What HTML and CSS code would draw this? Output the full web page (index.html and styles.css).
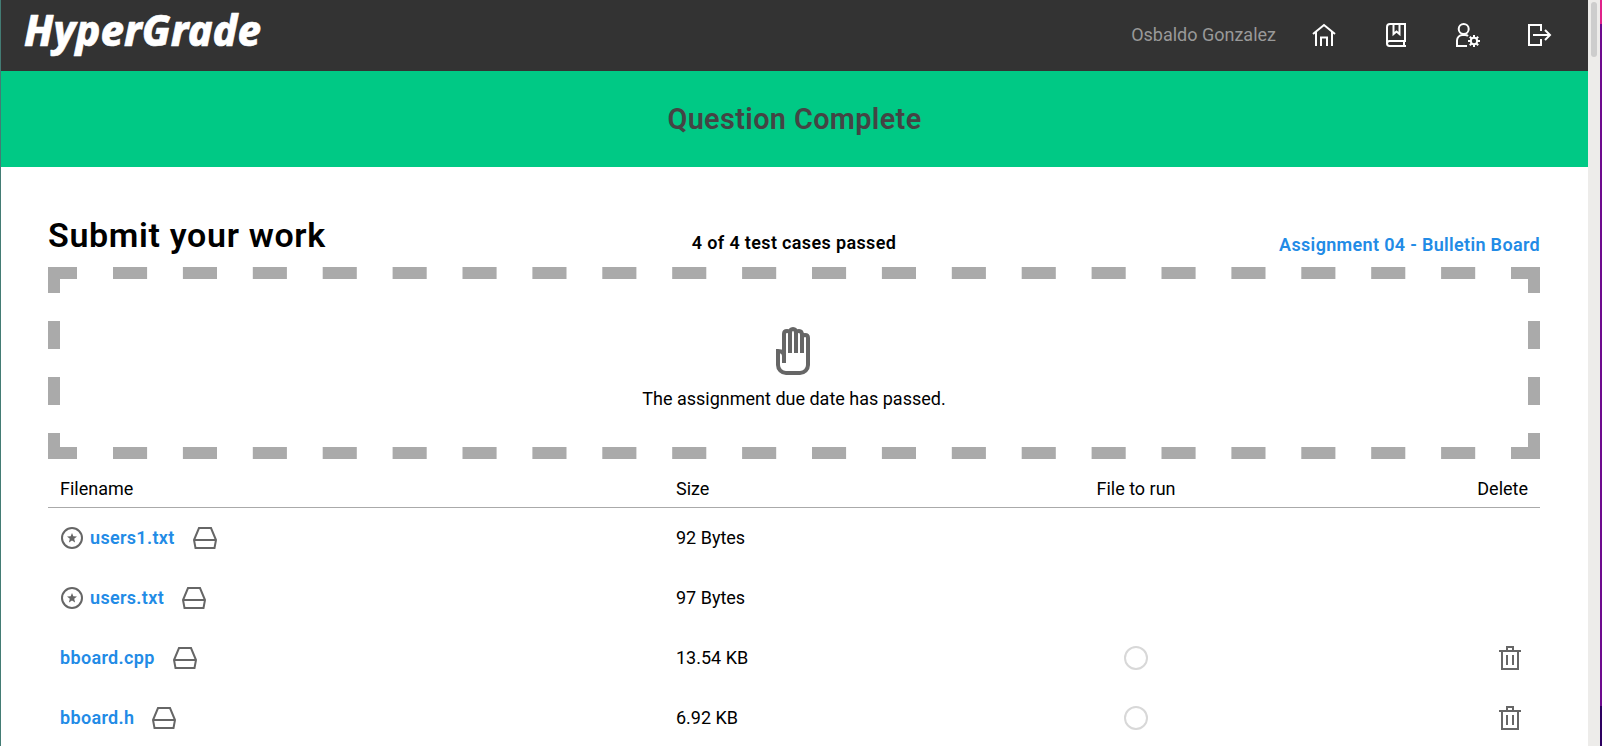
FILE: index.html
```html
<!DOCTYPE html>
<html lang="en">
<head>
<meta charset="utf-8">
<title>HyperGrade</title>
<link rel="stylesheet" href="styles.css">
</head>
<body>
<svg class="defs" width="0" height="0">
  <symbol id="drive" viewBox="0 0 24 24"><path d="M6 2h12l5 12-1.5 8h-19L1 14zM1 14h22"/></symbol>
  <symbol id="star" viewBox="0 0 24 24"><circle cx="12" cy="12" r="10"/><path class="solid" d="M12 7l1.3 3.3 3.7.2-2.8 2.3.9 3.6-3.1-2-3.1 2 .9-3.6L7 10.500l3.700-.2z"/></symbol>
  <symbol id="trash" viewBox="0 0 24 24"><path d="M1 5h22M4 5v18h16V5M9 5V1h6v4M9 9v10M15 9v10"/></symbol>
</svg>
<div class="window">
  <div class="page">
    <header class="topbar">
      <svg class="logo" width="250" height="60" viewBox="0 0 250 60"><text x="2" y="45.500" textLength="237" lengthAdjust="spacingAndGlyphs">HyperGrade</text></svg>
      <nav class="nav">
        <span class="user">Osbaldo Gonzalez</span>
        <svg class="icon" viewBox="0 0 24 24"><path d="M1 11l11-9 11 9M4 9v14M20 9v14M9 23v-8.500h6V23"/></svg>
        <svg class="icon" viewBox="0 0 24 24"><path d="M3 20.500V4a3 3 0 0 1 3-3h15v17H5.500a2.500 2.500 0 0 0 0 5H22M20 18v5M9.500 1v10l3-2.500 3 2.500V1"/></svg>
        <svg class="icon" viewBox="0 0 24 24"><circle cx="7.700" cy="6" r="5"/><path d="M11 23H1v-5.500a5.500 5.500 0 0 1 5.500-5.500H9q2 0 3 1"/><circle cx="18" cy="18" r="3.200"/><path d="M18 12v3M18 21v3M12 18h3M21 18h3M13.800 13.800l2 2M20.200 20.200l2 2M13.800 22.200l2-2M20.200 15.800l2-2"/></svg>
        <svg class="icon" viewBox="0 0 24 24"><path d="M13 8V2H1v20h12v-6M5 12h17M17 7l5 5-5 5"/></svg>
      </nav>
    </header>
    <div class="banner">Question Complete</div>
    <main class="content">
      <div class="heading">
        <h1 class="title">Submit your work</h1>
        <span class="passed">4 of 4 test cases passed</span>
        <a class="assignment">Assignment 04 - Bulletin Board</a>
      </div>
      <section class="dropzone">
        <svg class="dashes" width="1492" height="192" viewBox="0 0 1492 192">
          <path class="dash-h" d="M65 6H1440M65 186H1440"/>
          <path class="dash-v" d="M6 12V180M1486 12V180"/>
          <path class="corner" d="M0 0h29v12H0zM1463 0h29v12h-29zM0 180h29v12H0zM1463 180h29v12h-29z"/>
        </svg>
        <svg class="hand" viewBox="0 0 24 24"><path d="M7 18V3.500Q7 2 8.500 2T10 3V13M10 3q0-2 1.500-2T13 3V13M13 3q0-1 1.500-1T16 4V13M16 5.500Q16 4 17.500 4T19 5.500V19a4 4 0 0 1-4 4H8a4 4 0 0 1-4-4V12q3 0 3 2.500"/></svg>
        <p class="notice">The assignment due date has passed.</p>
      </section>
      <div class="files">
        <div class="row head"><span>Filename</span><span>Size</span><span class="mid">File to run</span><span class="end">Delete</span></div>
        <div class="row"><span class="name"><svg class="icon lead"><use href="#star"/></svg><a>users1.txt</a><svg class="icon drive"><use href="#drive"/></svg></span><span>92 Bytes</span></div>
        <div class="row"><span class="name"><svg class="icon lead"><use href="#star"/></svg><a>users.txt</a><svg class="icon drive"><use href="#drive"/></svg></span><span>97 Bytes</span></div>
        <div class="row"><span class="name"><a>bboard.cpp</a><svg class="icon drive"><use href="#drive"/></svg></span><span>13.54 KB</span><span class="mid"><i class="radio"></i></span><span class="end"><svg class="icon bin"><use href="#trash"/></svg></span></div>
        <div class="row"><span class="name"><a>bboard.h</a><svg class="icon drive"><use href="#drive"/></svg></span><span>6.92 KB</span><span class="mid"><i class="radio"></i></span><span class="end"><svg class="icon bin"><use href="#trash"/></svg></span></div>
      </div>
    </main>
  </div>
  <div class="scrollbar"><div class="thumb"></div></div>
  <div class="edge"></div>
</div>
</body>
</html>
```
FILE: styles.css
```css
* { box-sizing: border-box; }
body { margin: 0; font: 18px/24px Roboto, sans-serif; color: #000; overflow: hidden; }
.defs { position: absolute; }
.window { display: flex; height: 746px; border-left: 1px solid #437c74; background: #fff; }
.page { flex: 1; overflow: hidden; }
.topbar { display: flex; justify-content: space-between; height: 71px; padding: 0 36px 0 21px; background: #333; }
.logo text { font: italic 800 42px "Noto Sans", sans-serif; fill: #fff; stroke: #fff; stroke-width: 0.6; stroke-linejoin: round; }
.nav { display: flex; align-items: center; gap: 48px; height: 70px; }
.user { color: #999; margin-right: -12px; }
.icon { width: 24px; height: 24px; flex: none; display: block; fill: none; stroke: #fff; stroke-width: 2; }
.banner { height: 96px; background: #00c985; color: #444; text-align: center; font-size: 28.8px; font-weight: 600; line-height: 96px; letter-spacing: 0.4px; }
.content { padding: 0 48px 0 47px; }
.heading { display: grid; grid-template-columns: 1fr auto 1fr; height: 100px; }
.title { margin: 0; padding-top: 48px; font-size: 34px; font-weight: 600; line-height: 40px; letter-spacing: 0.67px; }
.passed { padding-top: 64px; font-weight: 600; letter-spacing: 0.35px; }
.assignment { padding-top: 66px; text-align: right; font-weight: 600; letter-spacing: 0.33px; color: #228be6; }
.dropzone { position: relative; height: 192px; padding-top: 60px; text-align: center; }
.dashes { position: absolute; inset: 0; fill: none; stroke: #aaa; stroke-width: 12; }
.dash-h { stroke-dasharray: 34.1 35.8; }
.dash-v { stroke-dasharray: 28; stroke-dashoffset: 14; }
.corner { fill: #aaa; stroke: none; }
.hand { display: block; width: 48px; height: 48px; margin: 0 auto; fill: none; stroke: #666; stroke-width: 2; }
.notice { margin: 12px 0 0; }
.row { display: grid; grid-template-columns: 616px 380px 160px 1fr; align-items: center; height: 60px; padding: 0 12px; }
.head { height: 49px; padding-top: 11px; border-bottom: 1px solid #aaa; }
.mid { display: flex; justify-content: center; }
.end { display: flex; justify-content: flex-end; }
.name { display: flex; align-items: center; }
.name a { color: #228be6; font-weight: 600; letter-spacing: 0.33px; }
.row .icon { stroke: #666; }
.row .icon.drive { margin-left: 18px; }
.row .icon.lead { margin-right: 6px; }
.row .icon.bin { margin-right: 6px; }
.solid { fill: #666; stroke: none; }
.radio { width: 24px; height: 24px; border: 2px solid #d8d8d8; border-radius: 50%; }
.scrollbar { width: 12px; padding: 2px 3px; background: #edecea; }
.thumb { height: 55px; border-radius: 3px; background: #cdcdcd; }
.edge { width: 2px; background: linear-gradient(#e0218a 0 24px, #6d0a8e 24px 706px, #2d0060 706px); }
```
